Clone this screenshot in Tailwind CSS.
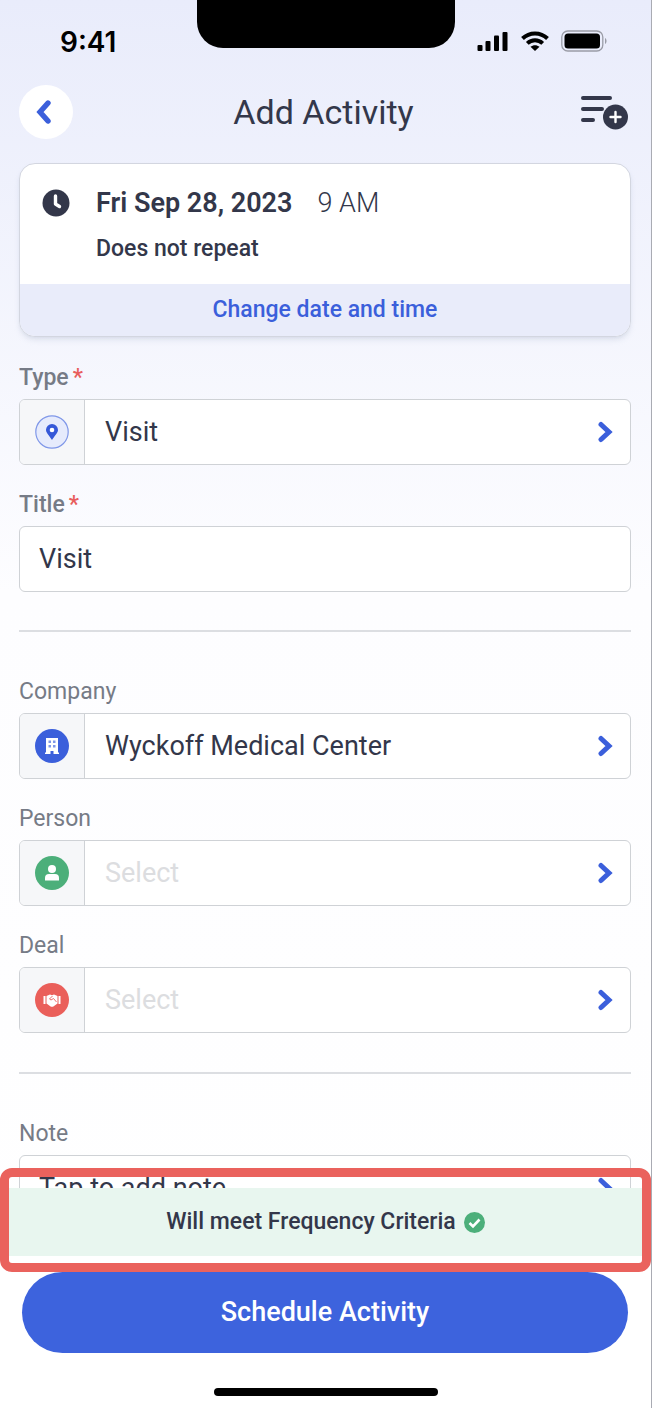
<!DOCTYPE html>
<html lang="en">
<head>
  <meta charset="UTF-8">
  <meta name="viewport" content="width=device-width, initial-scale=1.0">
  <title>Add Activity</title>
  <!-- Tailwind CSS -->
  <script src="https://cdn.jsdelivr.net/npm/@tailwindcss/browser@4"></script>
</head>
<body class="bg-white font-['Roboto',sans-serif] text-[#33374a]">
  <!-- Icons used more than once -->
  <svg class="hidden">
    <symbol id="chevron" viewBox="0 0 16 22">
      <path d="M4 3.5 L12 11 L4 18.5" fill="none" stroke="currentColor" stroke-width="5" stroke-linecap="round" stroke-linejoin="miter" />
    </symbol>
  </svg>

  <div class="flex h-screen flex-col overflow-hidden border-r border-[#a9abb3] bg-linear-to-b from-[#e9ecfb] via-[#fdfdff] via-42% to-white">
    <!-- Status bar -->
    <div class="grid h-[72px] shrink-0 grid-cols-[1fr_258px_1fr] items-start">
      <div class="pl-[60px] pt-6 font-['Inter',sans-serif] text-[28px] leading-9 font-semibold text-black">9:41</div>
      <div class="h-12 rounded-b-[26px] bg-black"></div>
      <div class="flex items-center justify-end gap-3 pt-[30px] pr-11 text-black">
        <svg class="h-[22px] w-8" viewBox="0 0 32 22" fill="currentColor">
          <rect x="0.5" y="15" width="5" height="6" rx="1" />
          <rect x="8.500" y="11" width="5" height="10" rx="1" />
          <rect x="17" y="5.500" width="5" height="15.500" rx="1" />
          <rect x="25.500" y="2" width="5" height="19" rx="1" />
        </svg>
        <svg class="h-[22px] w-7" viewBox="0 0 28 22" fill="none" stroke="currentColor" stroke-width="4">
          <path d="M1.5 8.5 C8.5 1.7 19.5 1.7 26.5 8.5" />
          <path d="M6.3 13.4 C10.7 9.3 17.3 9.3 21.7 13.4" />
          <path d="M14 21 L9.5 16.7 C12 14.6 16 14.6 18.5 16.7 Z" fill="currentColor" stroke="none" />
        </svg>
        <svg class="h-[22px] w-[46px]" viewBox="0 0 46 22" fill="none">
          <rect x="0.8" y="1" width="41" height="20" rx="6" stroke="#9a9ca6" stroke-width="1.3" />
          <rect x="3.5" y="3.5" width="35.5" height="15" rx="3.5" fill="currentColor" />
          <path d="M44 8 C46 9 46 13 44 14 Z" fill="#9a9ca6" />
        </svg>
      </div>
    </div>

    <!-- Header -->
    <header class="grid shrink-0 grid-cols-[1fr_auto_1fr] items-center pt-[13px] pr-[23px] pl-[19px]">
      <button type="button" aria-label="Back" class="flex size-[54px] items-center justify-center rounded-full bg-white text-[#3b5fdb]">
        <svg class="h-[26px] w-5" viewBox="0 0 20 26" fill="none" stroke="currentColor" stroke-width="5.4" stroke-linecap="round" stroke-linejoin="miter">
          <path d="M12 4 L4 13 L12 22" />
        </svg>
      </button>
      <h1 class="text-[34px] leading-10">Add Activity</h1>
      <button type="button" aria-label="Add to list" class="justify-self-end">
        <svg class="h-[36px] w-12" viewBox="0 0 48 36" fill="none">
          <path d="M3 4 H30 M3 15 H22 M3 26 H13" stroke="currentColor" stroke-width="4" stroke-linecap="round" />
          <circle cx="35.500" cy="23" r="12.500" fill="currentColor" />
          <path d="M35.500 18 V28 M30.500 23 H40.500" stroke="white" stroke-width="2.400" stroke-linecap="round" />
        </svg>
      </button>
    </header>

    <!-- Form -->
    <main class="min-h-0 flex-1 overflow-hidden pt-6 pr-5 pl-[19px]">
      <!-- Date and time -->
      <section class="mb-[27px] overflow-hidden rounded-2xl border border-[#d3d6e0] bg-white shadow-md shadow-slate-400/20">
        <div class="flex h-[120px] gap-[26px] pt-[19px] pl-[22px]">
          <svg class="mt-[6px] size-7" viewBox="0 0 28 28" fill="none">
            <circle cx="14" cy="14" r="13.5" fill="currentColor" />
            <path d="M13.500 7 V15 L17.500 17.500" stroke="white" stroke-width="3.400" stroke-linecap="round" stroke-linejoin="round" />
          </svg>
          <div>
            <p class="flex gap-[25px] text-[27px] leading-10"><span class="font-semibold">Fri Sep 28, 2023</span><span class="font-light">9 AM</span></p>
            <p class="pt-2 text-[23px] leading-9 font-medium">Does not repeat</p>
          </div>
        </div>
        <button type="button" class="h-[52px] w-full bg-[#e9ecfa] text-[23px] font-medium text-[#3b5fdb]">Change date and time</button>
      </section>

      <div class="flex flex-col gap-[26px]">
        <div>
          <label for="type" class="mb-[7px] block text-[23px] leading-7 font-medium text-[#767b86]">Type<span class="ml-1 text-[#e85d5d]">*</span></label>
          <button type="button" id="type" class="flex h-[66px] w-full items-center overflow-hidden rounded-md border border-[#cfd2d6] bg-white pr-[17px] text-left">
            <span class="flex h-full w-[65px] items-center justify-center border-r border-[#cfd2d6] bg-[#f6f7f9]">
              <svg class="size-[34px]" viewBox="0 0 34 34">
                <circle cx="17" cy="17" r="16.2" fill="#e6ebfc" stroke="#7f97e8" stroke-width="1.2" />
                <path d="M17 25 C15 21.5 11 18 11 15 A6 6 0 0 1 23 15 C23 18 19 21.5 17 25 Z" fill="#3558d8" />
                <circle cx="17" cy="15" r="2.3" fill="white" />
              </svg>
            </span>
            <span class="flex-1 pl-5 text-[27px]">Visit</span>
            <svg class="h-[22px] w-4 text-[#3b5fdb]"><use href="#chevron" /></svg>
          </button>
        </div>
        <div>
          <label for="title" class="mb-[7px] block text-[23px] leading-7 font-medium text-[#767b86]">Title<span class="ml-1 text-[#e85d5d]">*</span></label>
          <input type="text" id="title" value="Visit" required class="block h-[66px] w-full rounded-md border border-[#cfd2d6] bg-white px-[19px] text-[27px]">
        </div>
      </div>

      <hr class="mt-[38px] mb-[46px] border-t-2 border-[#dcdee2]">

      <div class="flex flex-col gap-[26px]">
        <div>
          <label for="company" class="mb-[7px] block text-[23px] leading-7 text-[#767b86]">Company</label>
          <button type="button" id="company" class="flex h-[66px] w-full items-center overflow-hidden rounded-md border border-[#cfd2d6] bg-white pr-[17px] text-left">
            <span class="flex h-full w-[65px] items-center justify-center border-r border-[#cfd2d6] bg-[#f6f7f9]">
              <svg class="size-[34px]" viewBox="0 0 34 34">
                <circle cx="17" cy="17" r="17" fill="#3b5fdb" />
                <path d="M11 9 H23 V23.500 H24 V25 H18.500 V22 H15.500 V25 H10 V23.500 H11 Z" fill="white" />
                <path d="M13.500 11.500 H16 V14 H13.500 Z M18 11.500 H20.500 V14 H18 Z M13.500 16 H16 V18.500 H13.500 Z M18 16 H20.500 V18.500 H18 Z" fill="#7f97e8" />
              </svg>
            </span>
            <span class="flex-1 pl-5 text-[27px]">Wyckoff Medical Center</span>
            <svg class="h-[22px] w-4 text-[#3b5fdb]"><use href="#chevron" /></svg>
          </button>
        </div>
        <div>
          <label for="person" class="mb-[7px] block text-[23px] leading-7 text-[#767b86]">Person</label>
          <button type="button" id="person" class="flex h-[66px] w-full items-center overflow-hidden rounded-md border border-[#cfd2d6] bg-white pr-[17px] text-left">
            <span class="flex h-full w-[65px] items-center justify-center border-r border-[#cfd2d6] bg-[#f6f7f9]">
              <svg class="size-[34px]" viewBox="0 0 34 34">
                <circle cx="17" cy="17" r="17" fill="#4caf7a" />
                <circle cx="17" cy="13" r="4" fill="white" />
                <path d="M10 24.500 V22 A4 4 0 0 1 14 18 H20 A4 4 0 0 1 24 22 V24.500 Z" fill="white" />
              </svg>
            </span>
            <span class="flex-1 pl-5 text-[27px] text-[#dcdde0]">Select</span>
            <svg class="h-[22px] w-4 text-[#3b5fdb]"><use href="#chevron" /></svg>
          </button>
        </div>
        <div>
          <label for="deal" class="mb-[7px] block text-[23px] leading-7 text-[#767b86]">Deal</label>
          <button type="button" id="deal" class="flex h-[66px] w-full items-center overflow-hidden rounded-md border border-[#cfd2d6] bg-white pr-[17px] text-left">
            <span class="flex h-full w-[65px] items-center justify-center border-r border-[#cfd2d6] bg-[#f6f7f9]">
              <svg class="size-[34px]" viewBox="0 0 34 34">
                <circle cx="17" cy="17" r="17" fill="#ea5f5a" />
                <path d="M8.500 13 H10.500 V21 H8.500 Z M23.500 13 H25.500 V21 H23.500 Z" fill="white" />
                <path d="M11.500 13 L15 11.500 L17 12.300 L19 11.500 L22.500 13 V20.500 L18 23.800 H16 L11.500 20.500 Z" fill="white" />
                <path d="M17.500 13 L14.500 16 L16 17 L18.500 15.500 L21.500 19" fill="none" stroke="#ea5f5a" stroke-width="0.9" />
              </svg>
            </span>
            <span class="flex-1 pl-5 text-[27px] text-[#dcdde0]">Select</span>
            <svg class="h-[22px] w-4 text-[#3b5fdb]"><use href="#chevron" /></svg>
          </button>
        </div>
      </div>

      <hr class="mt-[39px] mb-[46px] border-t-2 border-[#dcdee2]">

      <div>
        <label for="note" class="mb-[7px] block text-[23px] leading-7 text-[#767b86]">Note</label>
        <button type="button" id="note" class="flex h-[66px] w-full items-center rounded-md border border-[#cfd2d6] bg-white pr-[17px] text-left">
          <span class="flex-1 pl-[19px] text-[27px]">Tap to add note</span>
          <svg class="h-[22px] w-4 text-[#3b5fdb]"><use href="#chevron" /></svg>
        </button>
      </div>
    </main>

    <!-- Footer -->
    <footer class="relative shrink-0 bg-white pb-3">
      <div class="flex h-[68px] items-center justify-center gap-2 bg-[#e8f6ef] text-[23px] font-medium">
        <span>Will meet Frequency Criteria</span>
        <svg class="size-[21px]" viewBox="0 0 21 21" fill="none">
          <circle cx="10.500" cy="10.500" r="10.500" fill="#4caf7a" />
          <path d="M5.500 11 L9 14.500 L15.500 7.500" stroke="white" stroke-width="2.600" />
        </svg>
      </div>
      <div class="pt-4 pr-[23px] pl-[22px]">
        <button type="button" class="h-[81px] w-full rounded-full bg-[#3d63dd] text-[27px] font-medium text-white">Schedule Activity</button>
      </div>
      <div class="mx-auto mt-[35px] h-2 w-56 rounded-full bg-black"></div>
      <!-- Highlight around the criteria message -->
      <div class="pointer-events-none absolute inset-x-0 -top-5 h-[104px] rounded-xl border-9 border-[#ea625d]"></div>
    </footer>
  </div>
</body>
</html>
